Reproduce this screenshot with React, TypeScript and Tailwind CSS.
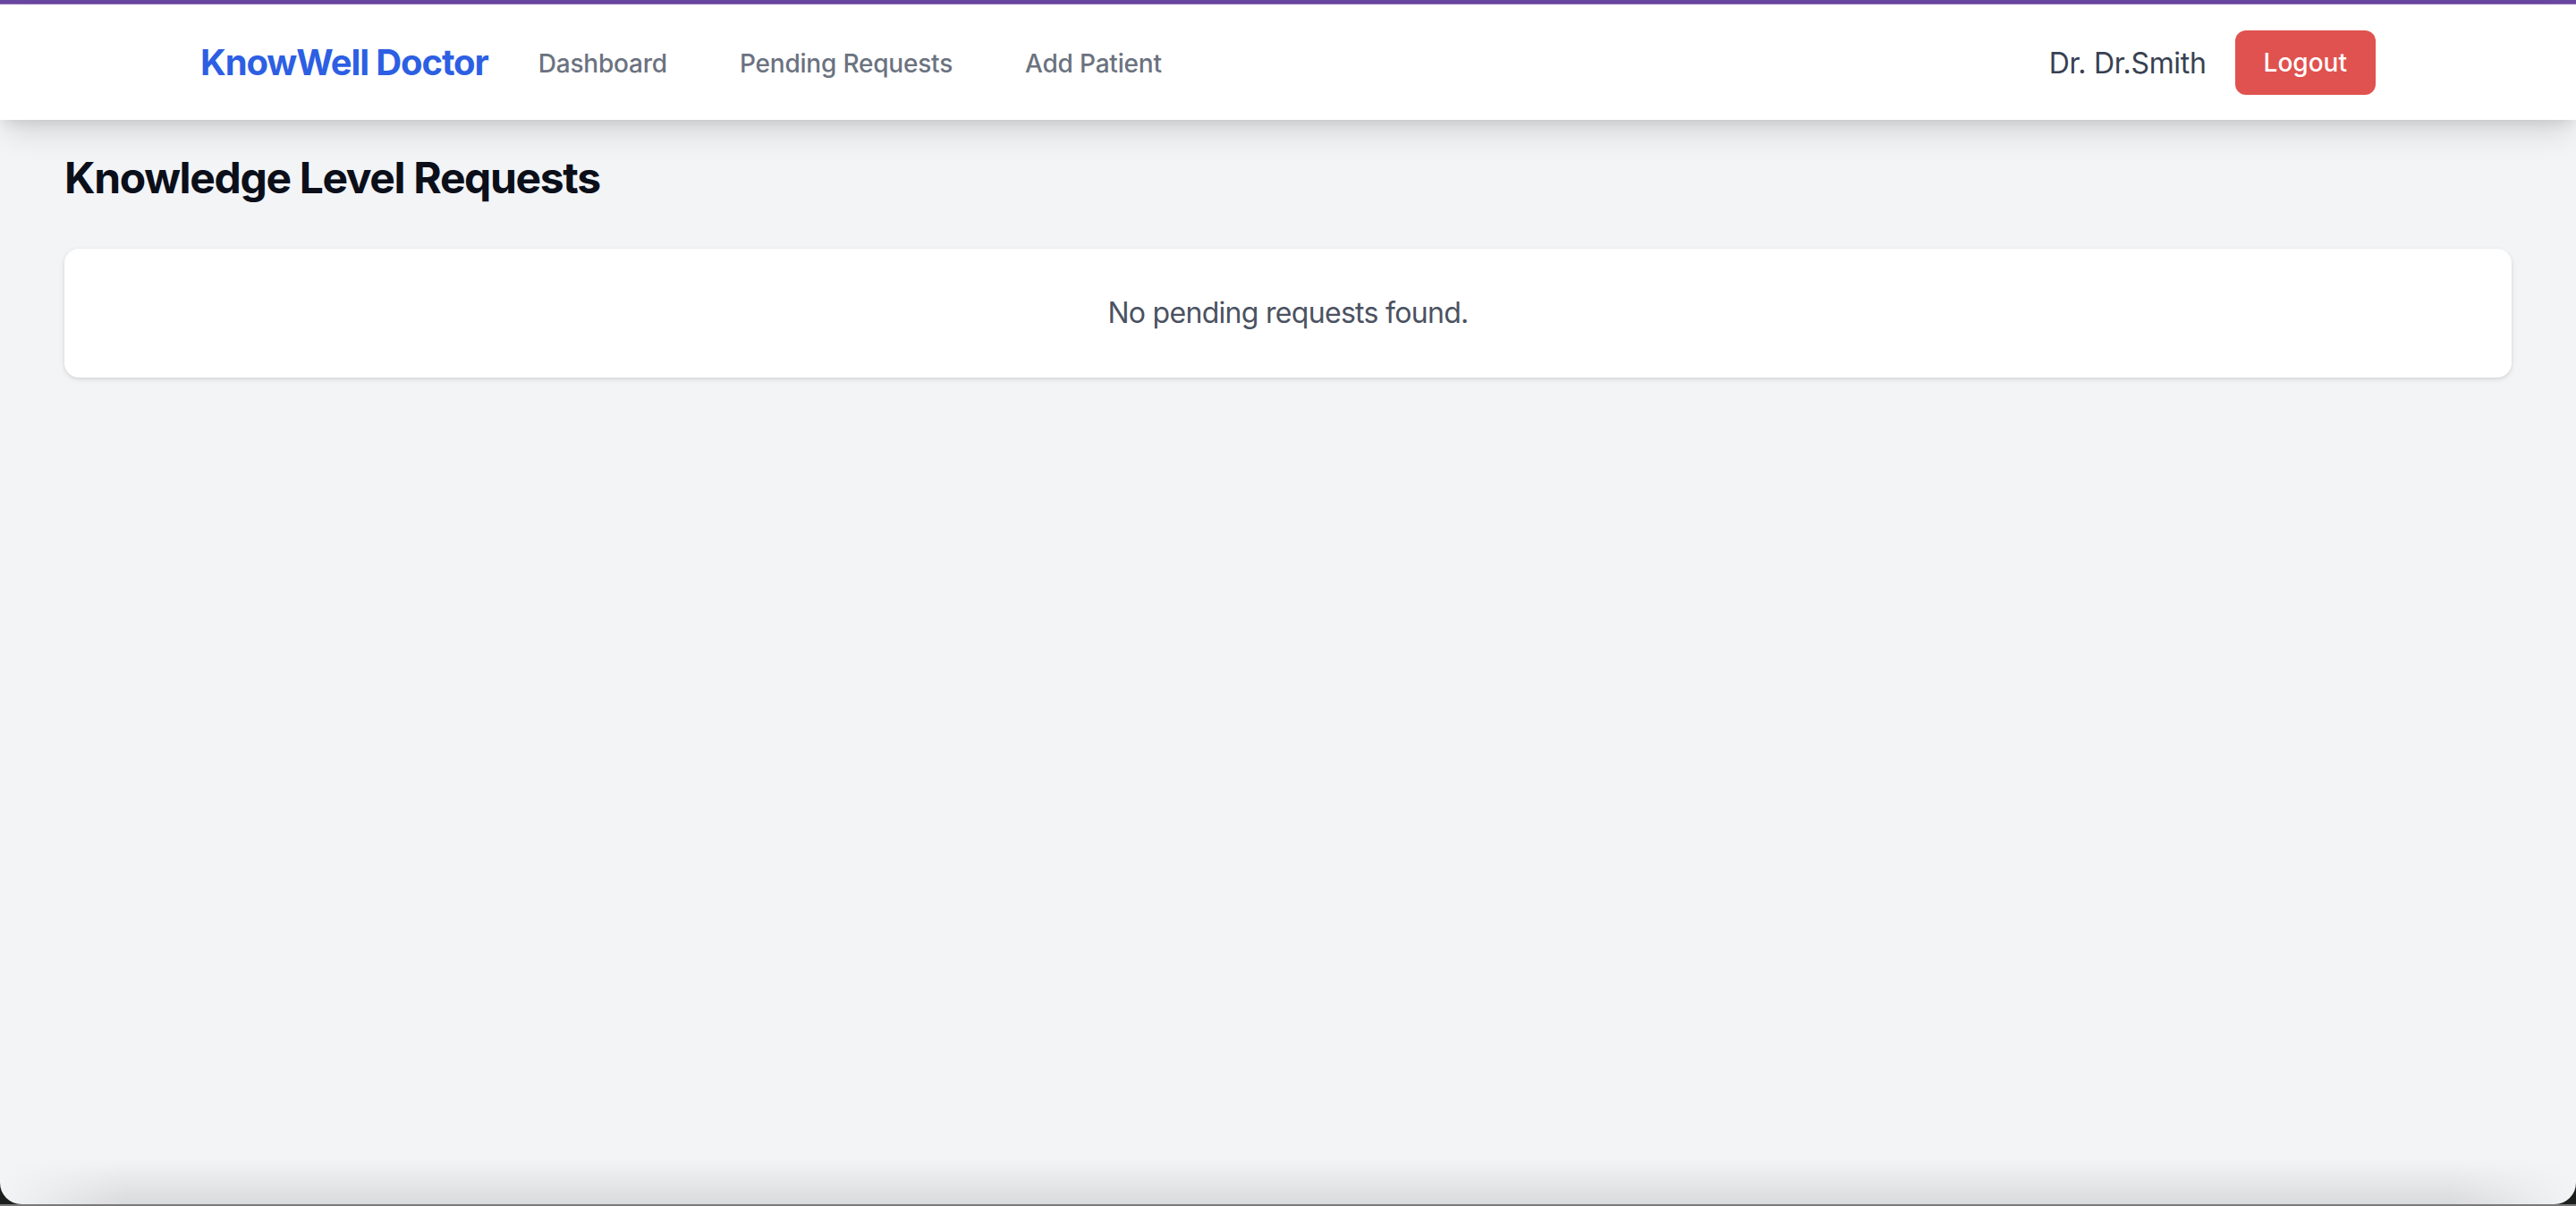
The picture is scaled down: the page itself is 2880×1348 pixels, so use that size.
import React from 'react';

const navLinks = ['Dashboard', 'Pending Requests', 'Add Patient'];

const NavBar: React.FC = () => {
  return (
    <nav className="relative z-10 h-[129px] bg-white shadow-[0_20px_30px_-6px_rgba(0,0,0,0.12),0_8px_12px_-4px_rgba(0,0,0,0.08)]">
      <div className="mx-auto flex h-full max-w-[2560px] items-center justify-between px-[64px]">
        <div className="flex items-center">
          <span className="text-[40px] font-bold leading-[56px] tracking-[-1.1px] text-[#2d5fe3]">
            KnowWell Doctor
          </span>
          <div className="ml-[32px] flex items-center gap-[33px] pt-[3px]">
            {navLinks.map((link) => (
              <a
                key={link}
                className="px-[24px] text-[28px] font-medium leading-[40px] tracking-[-0.2px] text-[#6b7280]"
              >
                {link}
              </a>
            ))}
          </div>
        </div>
        <div className="flex items-center gap-[32px]">
          <span className="pt-[2px] text-[32px] leading-[48px] tracking-[-0.3px] text-[#374151]">Dr. Dr.Smith</span>
          <button className="rounded-[12px] bg-[#e0524f] px-[32px] py-[16px] text-[28px] font-medium leading-[40px] text-white">
            Logout
          </button>
        </div>
      </div>
    </nav>
  );
};

export default function App() {
  return (
    <div className="flex h-[1348px] flex-col bg-[#1c1f1c] font-['Inter',sans-serif]">
      <div className="flex flex-1 flex-col overflow-hidden rounded-b-[24px] bg-[#f3f4f6]">
        <div className="h-[4px] bg-[#6a45a0]" />
        <div className="h-[1px] bg-[#8e6db3]" />
        <NavBar />
        <main className="flex-1 px-[72px] pt-[33px]">
          <h1 className="mb-[47px] text-[48px] font-bold leading-[64px] tracking-[-1.35px] text-[#0b0f1a]">
            Knowledge Level Requests
          </h1>
          <div className="rounded-[16px] bg-white p-[48px] text-center shadow-[0_2px_6px_rgba(0,0,0,0.1),0_1px_3px_rgba(0,0,0,0.06)]">
            <p className="text-[32px] leading-[48px] tracking-[-0.7px] text-[#4b5261]">No pending requests found.</p>
          </div>
        </main>
        <div className="h-[50px] bg-[linear-gradient(to_bottom,transparent,rgba(0,0,0,0.1))] [mask-image:linear-gradient(to_right,transparent,black_140px,black_calc(100%-140px),transparent)]" />
      </div>
      <div className="h-[2px] bg-[#7a7a7a]" />
    </div>
  );
}
